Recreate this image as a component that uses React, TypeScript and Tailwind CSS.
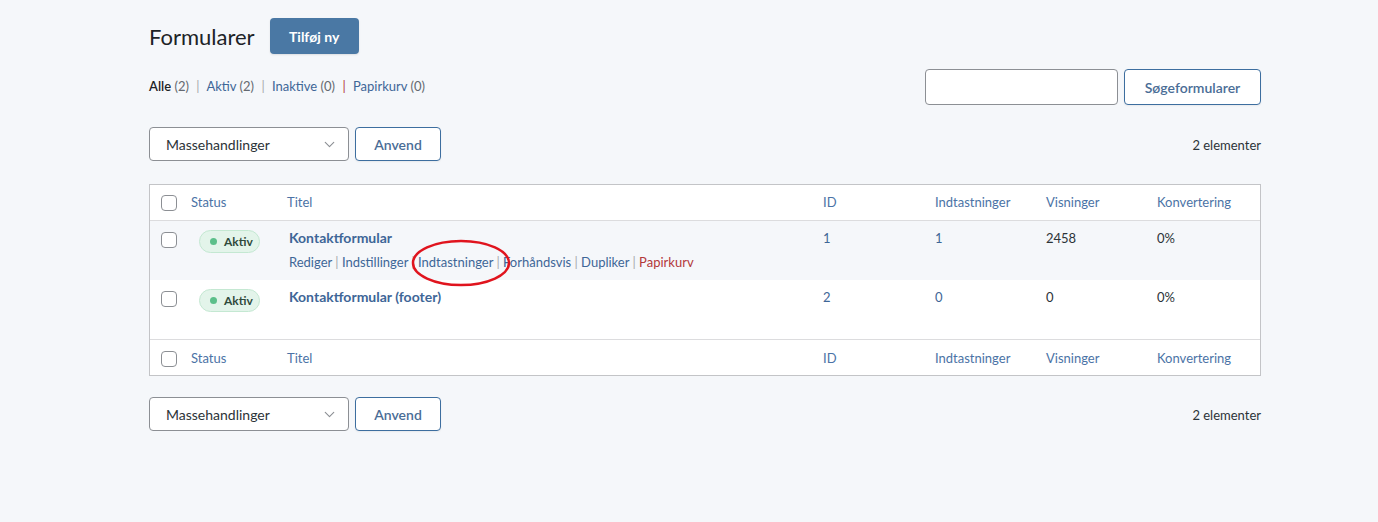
import { ChevronDown } from 'lucide-react';

const cols = 'grid grid-cols-[41px_96px_536px_112px_111px_111px_1fr]';

function Checkbox() {
    return <span className="block w-4 h-4 rounded-[4px] border border-[#8c8f94] bg-white" />;
}

function BulkBar() {
    return (
        <div className="flex items-center justify-between">
            <div className="flex items-center gap-[6px]">
                <div className="w-[200px] h-[34px] flex items-center justify-between pl-4 pr-[10px] bg-white border border-[#8c8f94] rounded-[4px] text-[14px] text-[#2c3338]">
                    <span>Massehandlinger</span>
                    <ChevronDown size={17} strokeWidth={1.6} className="text-[#8c8f94]" />
                </div>
                <button className="w-[86px] h-[34px] bg-white border border-[#3d6e9f] rounded-[4px] text-[14px] font-semibold text-[#4a6d96] shadow-[0_1px_2px_rgba(0,0,0,0.06)]">
                    Anvend
                </button>
            </div>
            <span className="pt-[3px] text-[13px] text-[#2c3338]">2 elementer</span>
        </div>
    );
}

function HeaderRow({ bottom }: { bottom?: boolean }) {
    return (
        <div className={`${cols} h-9 items-center text-[13px] text-[#4b73a6] ${bottom ? 'border-t border-[#dcdcde] pt-[2px]' : 'border-b border-[#dcdcde]'}`}>
            <div className="pl-[11px]">
                <Checkbox />
            </div>
            <div>Status</div>
            <div>Titel</div>
            <div>ID</div>
            <div>Indtastninger</div>
            <div>Visninger</div>
            <div>Konvertering</div>
        </div>
    );
}

function Badge() {
    return (
        <span className="ml-2 inline-flex items-center gap-[7px] h-[23px] w-[61px] pl-[10px] rounded-full bg-[#e3f4ea] border border-[#c4e8d2] text-[12px] font-bold text-[#2f4a3b]">
            <span className="w-[7px] h-[7px] rounded-full bg-[#5cbf8a]" />
            Aktiv
        </span>
    );
}

type Row = { title: string; id: string; entries: string; views: string; conv: string; actions?: boolean };

const rows: Row[] = [
    { title: 'Kontaktformular', id: '1', entries: '1', views: '2458', conv: '0%', actions: true },
    { title: 'Kontaktformular (footer)', id: '2', entries: '0', views: '0', conv: '0%' },
];

function FormRow({ row, shaded }: { row: Row; shaded: boolean }) {
    return (
        <div className={`${cols} h-[59px] pt-[7px] text-[13px] ${shaded ? 'bg-[#f5f7fa]' : 'bg-white'}`}>
            <div className="pl-[11px] pt-[4px]">
                <Checkbox />
            </div>
            <div className="pt-[2px]">
                <Badge />
            </div>
            <div className="pl-[2px]">
                <div className="text-[14px] font-bold text-[#3e6697] leading-[20px]">{row.title}</div>
                {row.actions && (
                    <div className="relative mt-[5px] text-[13px] text-[#3e6697] leading-[18px]">
                        Rediger <span className="text-[#a7aaad]">|</span> Indstillinger{' '}
                        <span className="text-[#a7aaad]">|</span> Indtastninger{' '}
                        <span className="text-[#a7aaad]">|</span> Forhåndsvis{' '}
                        <span className="text-[#a7aaad]">|</span> Dupliker{' '}
                        <span className="text-[#a7aaad]">|</span>{' '}
                        <span className="text-[#b3383a]">Papirkurv</span>
                        {/* red marker ring around the entries link */}
                        <svg className="absolute left-[121px] top-[-16px] pointer-events-none" width="102" height="52" viewBox="0 0 102 52">
                            <ellipse cx="51" cy="26" rx="48" ry="22" fill="none" stroke="#e0141e" strokeWidth="2.5" />
                        </svg>
                    </div>
                )}
            </div>
            <div className="leading-[20px] text-[#3e6697]">{row.id}</div>
            <div className="leading-[20px] text-[#3e6697]">{row.entries}</div>
            <div className="leading-[20px] text-[#2c3338]">{row.views}</div>
            <div className="leading-[20px] text-[#2c3338]">{row.conv}</div>
        </div>
    );
}

export default function App() {
    return (
        <div className="min-h-screen bg-[#f5f7fa] pl-[149px] pr-[117px] pt-[18px] font-['Lato',sans-serif] text-[#1d2327]">
            <div className="flex items-center gap-[15px]">
                <h1 className="text-[22px] text-[#1d2327]">Formularer</h1>
                <button className="w-[89px] h-9 rounded-[4px] bg-[#4a78a4] text-white text-[14px] font-bold shadow-[0_1px_2px_rgba(0,0,0,0.1)]">
                    Tilføj ny
                </button>
            </div>

            <div className="flex items-center justify-between mt-[15px]">
                <div className="text-[13px] text-[#646970]">
                    <span className="font-semibold text-[#1d2327]">Alle</span> (2){' '}
                    <span className="text-[#a7aaad] px-[4px]">|</span>{' '}
                    <span className="text-[#3e6697]">Aktiv</span> (2){' '}
                    <span className="text-[#a7aaad] px-[4px]">|</span>{' '}
                    <span className="text-[#3e6697]">Inaktive</span> (0){' '}
                    <span className="text-[#b3383a] px-[4px]">|</span>{' '}
                    <span className="text-[#3e6697]">Papirkurv</span> (0)
                </div>
                <div className="flex items-center gap-[6px]">
                    <input className="w-[193px] h-9 rounded-[4px] border border-[#8c8f94] bg-white" />
                    <button className="w-[137px] h-9 rounded-[4px] border border-[#3d6e9f] bg-white text-[14px] font-semibold text-[#4a6d96] shadow-[0_1px_2px_rgba(0,0,0,0.06)]">
                        Søgeformularer
                    </button>
                </div>
            </div>

            <div className="mt-[22px]">
                <BulkBar />
            </div>

            <div className="mt-[23px] border border-[#c3c4c7] bg-white">
                <HeaderRow />
                {rows.map((r, i) => (
                    <FormRow key={r.id} row={r} shaded={i === 0} />
                ))}
                <HeaderRow bottom />
            </div>

            <div className="mt-[21px]">
                <BulkBar />
            </div>
        </div>
    );
}
